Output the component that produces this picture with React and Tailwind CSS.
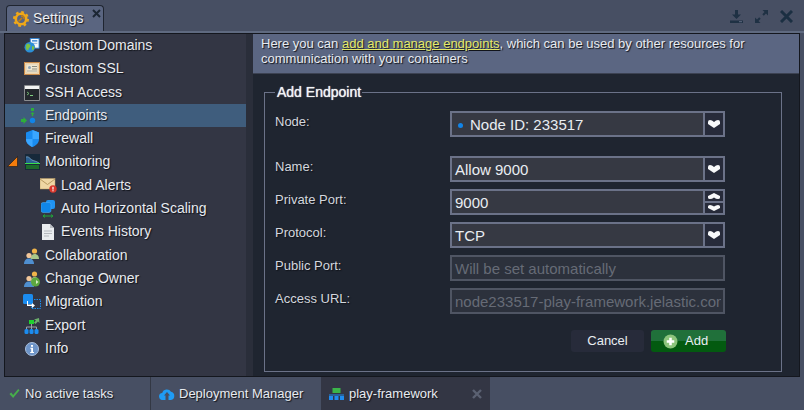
import React from "react";

const shadow = "[text-shadow:1px_1px_1px_#11141b]";

const DomainsIcon = () => (
  <svg width="16" height="15" viewBox="0 0 18 17">
    <rect x="7" y="0.5" width="10" height="11" fill="#f4f8fc" stroke="#2a7fd0" />
    <rect x="9" y="2.5" width="6" height="1.5" fill="#2a7fd0" />
    <rect x="9" y="5.5" width="6" height="1" fill="#7fa9d0" />
    <circle cx="6.5" cy="10.5" r="6" fill="#2b8fd8" />
    <path d="M3 7c2-1 3 0 4 1s0 2-1 3-1 3-2 3-2-2-2-3 0-3 1-4zM9 9l3 1-1 3-2 1z" fill="#7cc043" />
  </svg>
);
const SslIcon = () => (
  <svg width="16" height="13" viewBox="0 0 16 13">
    <rect x="0.5" y="0.5" width="15" height="12" fill="#f3dcb4" stroke="#c98a4a" />
    <rect x="2" y="2" width="12" height="9" fill="#efe6d0" stroke="#d9b98a" strokeWidth="0.5" />
    <circle cx="5.5" cy="5.5" r="1.5" fill="#8da4b8" />
    <rect x="8" y="4" width="5" height="1" fill="#8d8d80" />
    <rect x="8" y="6.5" width="5" height="1" fill="#8d8d80" />
    <rect x="3" y="8.5" width="10" height="1" fill="#a9a9a0" />
  </svg>
);
const SshIcon = () => (
  <svg width="16" height="16" viewBox="0 0 16 16">
    <rect x="0" y="0" width="16" height="16" rx="1" fill="#8b8d90" />
    <rect x="1" y="1" width="14" height="3" fill="#f2f2f2" />
    <rect x="1" y="4" width="14" height="11" fill="#23272c" />
    <path d="M3 7l2 1.5L3 10" stroke="#7fd07f" strokeWidth="0.8" fill="none" />
    <rect x="6" y="10" width="3" height="1" fill="#7fd07f" />
  </svg>
);
const EndpointsIcon = () => (
  <svg width="18" height="18" viewBox="0 0 18 18" className="-translate-x-[2px]">
    <rect x="10" y="1" width="3" height="3" fill="#2fae3a" />
    <path d="M11.500 5l2 2h-1.300v2h-1.400V7H9.500z" fill="#2fae3a" />
    <path d="M0 12h2.500V10L6 13.500 2.500 17v-2H0z" fill="#2fae3a" />
    <circle cx="11.500" cy="13.500" r="2.700" fill="#1184e8" />
  </svg>
);
const FirewallIcon = () => (
  <svg width="13" height="17" viewBox="0 0 13 17">
    <path d="M6.500 0L13 2.500V9c0 4-3 6.500-6.500 8C3 15.500 0 13 0 9V2.500z" fill="#1a8cf0" />
    <path d="M6.500 0L13 2.500V9H6.500z" fill="#3aa6ff" />
    <path d="M0 9h6.500v8C3 15.500 0 13 0 9z" fill="#3aa6ff" />
  </svg>
);
const MonitoringIcon = () => (
  <svg width="15" height="16" viewBox="0 0 15 16">
    <rect width="15" height="16" fill="#17293a" />
    <path d="M1 3c3-1 4 2 6 3s4 1 7 3v1H1z" fill="#2b5f8f" />
    <path d="M1 3c3-1 4 2 6 3s4 1 7 3" stroke="#9cc6e8" strokeWidth="0.6" fill="none" />
    <rect x="0" y="9" width="15" height="1" fill="#3adf4a" />
    <rect x="1" y="11" width="13" height="4" fill="#1c6a2c" />
  </svg>
);
const AlertsIcon = () => (
  <svg width="17" height="15" viewBox="0 0 17 15">
    <rect x="0" y="0.500" width="15" height="10.500" fill="#efd7a4" stroke="#b89a62" strokeWidth="0.5" />
    <path d="M0 1l7.500 5.500L15 1" stroke="#b89a62" fill="none" />
    <circle cx="13" cy="11" r="3.700" fill="#d8372c" />
    <rect x="12.400" y="8.800" width="1.200" height="2.800" fill="#fff" />
    <rect x="12.400" y="12.200" width="1.200" height="1.100" fill="#fff" />
  </svg>
);
const ScalingIcon = () => (
  <svg width="15" height="18" viewBox="0 0 15 18">
    <rect x="5" y="0" width="9" height="9" rx="2" fill="#1f93f2" />
    <rect x="0" y="2.500" width="10" height="10" rx="2" fill="#0f86ea" stroke="#56aef5" strokeWidth="0.5" />
    <path d="M2 16h10M2 16l2-1.500M2 16l2 1.500M12 16l-2-1.500M12 16l-2 1.500" stroke="#22a83a" fill="none" />
  </svg>
);
const HistoryIcon = () => (
  <svg width="12" height="16" viewBox="0 0 12 16">
    <path d="M0 0h8l4 4v12H0z" fill="#e9ecef" />
    <path d="M8 0l4 4H8z" fill="#b9bdc2" />
    <path d="M2 7h8M2 9.500h8M2 12h5" stroke="#b4b8bd" />
  </svg>
);
const PeopleIcon = ({ swap }) => (
  <svg width="16" height="16" viewBox="0 0 16 16">
    <circle cx="10.500" cy="3" r="2.600" fill="#f0b44a" />
    <path d="M6.500 11c0-3 2-5 4-5s4.500 1 4.500 5z" fill="#a9c68a" />
    <circle cx="5" cy="7.500" r="2.600" fill="#f3c79a" />
    <path d="M0 16c0-3.500 2-5.500 5-5.500s5 2 5 5.500z" fill="#4f8fd0" />
    {swap && <circle cx="11.500" cy="11" r="4.500" fill="#5da83f" />}
    {swap && <path d="M9 11h3V9l2.500 2-2.500 2v-2H9z" fill="#d9f0c8" />}
  </svg>
);
const MigrationIcon = () => (
  <svg width="18" height="15" viewBox="0 0 18 15">
    <rect x="0" y="0" width="10" height="10" rx="1.500" fill="#1b8cf0" />
    <rect x="8.500" y="5.500" width="9" height="9" fill="none" stroke="#1b8cf0" strokeDasharray="1.500 1" />
    <path d="M5 7v3.500h4V9l3 2.500L9 14v-2H4V7z" fill="#fff" />
  </svg>
);
const ExportIcon = () => (
  <svg width="16" height="16" viewBox="0 0 16 16">
    <rect x="5" y="2" width="5" height="4" fill="#1fd12f" />
    <path d="M10 1.500L15 0l.500 5-1.500-1.500L11.500 6 10 4.500l2-2z" fill="#6cae6c" />
    <path d="M7.500 6v3M2.500 11V9h10v2M7.500 9v2" stroke="#9aa0a8" fill="none" />
    <rect x="0.500" y="11" width="4" height="5" rx="1.500" fill="#1b8cf0" />
    <rect x="5.500" y="11" width="4" height="5" rx="1.500" fill="#1b8cf0" />
    <rect x="10.500" y="11" width="4" height="5" rx="1.500" fill="#1b8cf0" />
  </svg>
);
const InfoIcon = () => (
  <svg width="14" height="14" viewBox="0 0 14 14">
    <circle cx="7" cy="7" r="6.500" fill="#6d94c8" stroke="#a9bfdd" />
    <rect x="6" y="3" width="2" height="1.800" fill="#fff" />
    <path d="M5.300 5.800H8V10h1v1H5.200v-1h1V6.800h-.9z" fill="#fff" />
  </svg>
);
const GearIcon = () => (
  <svg width="16" height="16" viewBox="0 0 16 16">
    <circle cx="8" cy="8" r="5.200" fill="none" stroke="#f0a818" strokeWidth="2.600" />
    <circle cx="8" cy="8" r="6.900" fill="none" stroke="#f0a818" strokeWidth="2.200" strokeDasharray="2.700 2.720" />
    <path d="M5.500 10.500L9 7M8 5.200a2.200 2.200 0 0 1 2.800 2.800" stroke="#c47f10" strokeWidth="1.500" fill="none" />
  </svg>
);
const Chevron = ({ up, small }) => (
  <svg width="12" height={small ? 6 : 8} viewBox="0 0 12 8" preserveAspectRatio="none" className={up ? "rotate-180" : ""}>
    <path d="M0 2Q0 0 2 0Q4 0 6 2Q8 0 10 0Q12 0 12 2V4L6 8 0 4z" fill="#f8f9fa" />
  </svg>
);

const tree = [
  { label: "Custom Domains", icon: <DomainsIcon /> },
  { label: "Custom SSL", icon: <SslIcon />, tall: true },
  { label: "SSH Access", icon: <SshIcon /> },
  { label: "Endpoints", icon: <EndpointsIcon />, selected: true },
  { label: "Firewall", icon: <FirewallIcon /> },
  { label: "Monitoring", icon: <MonitoringIcon />, open: true, tall: true },
  { label: "Load Alerts", icon: <AlertsIcon />, child: true },
  { label: "Auto Horizontal Scaling", icon: <ScalingIcon />, child: true },
  { label: "Events History", icon: <HistoryIcon />, child: true, tall: true },
  { label: "Collaboration", icon: <PeopleIcon /> },
  { label: "Change Owner", icon: <PeopleIcon swap /> },
  { label: "Migration", icon: <MigrationIcon />, tall: true },
  { label: "Export", icon: <ExportIcon /> },
  { label: "Info", icon: <InfoIcon /> },
];

const TreeRow = ({ label, icon, selected, open, child, tall }) => (
  <div className={`flex items-center ${tall ? "h-[24px] pb-[1px]" : "h-[23px]"} ${selected ? "bg-[#3f5d7d]" : ""}`}>
    <div className="ml-[3px] flex w-[8px] justify-center">
      {open && (
        <svg width="11" height="11" viewBox="0 0 11 11" className="shrink-0">
          <path d="M0.500 10.500L10.500 0.500v10z" fill="#f47c0c" stroke="#11141b" strokeWidth="0.600" />
        </svg>
      )}
    </div>
    <div className={`flex w-[20px] justify-center ${child ? "ml-[22px]" : "ml-[6px]"}`}>{icon}</div>
    <span className={`ml-[3px] text-[14px] text-[#e8ebf0] ${shadow}`}>{label}</span>
  </div>
);

const Field = ({ label, value, disabled, dot, arrow, spin, last, first }) => (
  <div className={`flex ${first ? "mb-[19px]" : last ? "" : "mb-[7px]"}`}>
    <label className={`w-[175px] pt-[1px] text-[13px] text-[#d3d7de] ${shadow}`}>{label}</label>
    <div className={`flex h-[26px] w-[275px] border-2 ${disabled ? "border-[#4f5563] bg-[#2c313c]" : "border-[#6b7288] bg-[#363943]"}`}>
      <div className={`flex min-w-0 flex-1 items-center overflow-hidden pt-[2px] pl-[3px] text-[15px] whitespace-nowrap ${disabled ? "mr-[2px] text-[#666b76]" : "text-[#e9edf2]"}`}>
        {dot && <span className="mr-[7px] ml-[3px] h-[5px] w-[5px] shrink-0 rounded-full bg-[#1184e8]" />}
        {value}
      </div>
      {arrow && (
        <div className="flex w-[20px] items-center justify-center border-l-2 border-[#6b7288] bg-[#272b3a]">
          <Chevron />
        </div>
      )}
      {spin && (
        <div className="flex w-[20px] flex-col border-l-2 border-[#6b7288] bg-[#272b3a]">
          <div className="flex flex-1 items-center justify-center border-b-2 border-[#6b7288]">
            <Chevron up small />
          </div>
          <div className="flex flex-1 items-center justify-center">
            <Chevron small />
          </div>
        </div>
      )}
    </div>
  </div>
);

export default function App() {
  return (
    <div className="flex h-[410px] w-[804px] flex-col overflow-hidden bg-[#474f63] font-['Liberation_Sans',Arial,sans-serif]">
      {/* tabs */}
      <div className="flex h-[33px] shrink-0 items-end border-b-2 border-[#5f6a80] pl-[6px]">
        <div className="relative flex h-[26px] w-[98px] items-center rounded-t-[4px] border border-b-0 border-[#1f2530] bg-[#5a6580] pl-[6px]">
          <GearIcon />
          <span className={`ml-[4px] text-[14px] text-[#eef0f4] ${shadow}`}>Settings</span>
          <svg width="9" height="9" viewBox="0 0 9 9" className="absolute top-[3px] right-[2px]">
            <path d="M1 1l7 7M8 1L1 8" stroke="#1b2633" strokeWidth="2" />
          </svg>
        </div>
        <div className="mr-[11px] mb-[8px] ml-auto flex items-center gap-[12px]">
          <svg width="13" height="13" viewBox="0 0 13 13">
            <path d="M5 0h3v4.500h3L6.500 9 2 4.500h3zM0 10.500h13V13H0z" fill="#1f3144" />
            <rect x="9" y="11.200" width="3" height="1" fill="#5f6a80" />
          </svg>
          <svg width="13" height="13" viewBox="0 0 13 13">
            <path d="M7.500 0H13v5.500l-2-2L8.800 5.700 7.300 4.200 9.500 2zM5.500 13H0V7.500l2 2 2.200-2.200 1.500 1.500L3.500 11z" fill="#1f3144" />
          </svg>
          <svg width="13" height="13" viewBox="0 0 13 13">
            <path d="M1 1l11 11M12 1L1 12" stroke="#1b2f42" strokeWidth="3" />
          </svg>
        </div>
      </div>

      {/* window body */}
      <div className="mx-[4px] flex h-[344px] shrink-0 border border-[#14171e] bg-[#14171e]">
        <div className="w-[241px] shrink-0 bg-[#333644]">
          {tree.map((row) => (
            <TreeRow key={row.label} {...row} />
          ))}
        </div>
        <div className="w-[7px] shrink-0 bg-[#2a2e3a]" />
        <div className="flex min-w-0 flex-1 flex-col bg-[#1f2530]">
          <div className={`h-[40px] shrink-0 border-b border-[#3c4252] bg-[#5b6682] px-[8px] pt-[2px] text-[13px] leading-[15px] text-[#e8ebf0] ${shadow}`}>
            Here you can{" "}
            <span className="text-[#e4e96a] underline">add and manage endpoints</span>, which can be used by other resources for communication with your containers
          </div>
          <div className="relative mx-[11px] mt-[18px] h-[280px] w-[518px] border border-[#6b7288] px-[10px] pt-[18px]">
            <span className="absolute top-[-9px] left-[10px] bg-[#1f2530] pr-[1px] pl-[2px] text-[14px] leading-[16px] text-[#f2f4f7] [text-shadow:0_0_1px_#ffffff]">
              Add Endpoint
            </span>
            <Field label="Node:" value="Node ID: 233517" dot arrow first />
            <Field label="Name:" value="Allow 9000" arrow />
            <Field label="Private Port:" value="9000" spin />
            <Field label="Protocol:" value="TCP" arrow />
            <Field label="Public Port:" value="Will be set automatically" disabled />
            <Field label="Access URL:" value="node233517-play-framework.jelastic.com" disabled last />
            <div className="mt-[16px] flex justify-end gap-[7px] pr-[45px]">
              <button className="h-[22px] w-[73px] rounded-[3px] bg-[#272b3a] text-[13px] text-[#e9edf2]">Cancel</button>
              <button className="flex h-[22px] w-[75px] items-center gap-[7px] rounded-[3px] bg-[linear-gradient(#20703a_50%,#035a10_50%)] pl-[12px] text-[13px] text-[#e9edf2]">
                <svg width="15" height="15" viewBox="0 0 14 14">
                  <circle cx="7" cy="7" r="6.500" fill="#8cc47c" />
                  <path d="M5.800 3.500h2.400v2.300h2.300v2.400H8.200v2.300H5.800V8.200H3.500V5.800h2.300z" fill="#fff" />
                </svg>
                Add
              </button>
            </div>
          </div>
        </div>
      </div>

      {/* status bar */}
      <div className="flex flex-1 items-stretch text-[13px] text-[#e8ebf0]">
        <div className={`flex w-[151px] items-center border-r border-[#333844] pl-[9px] ${shadow}`}>
          <svg width="11" height="11" viewBox="0 0 12 11">
            <path d="M0.500 6l2-1.500L4.500 7 10 0.500l1.500 1.500L4.500 10.500z" fill="#47ae4b" />
          </svg>
          <span className="ml-[5px]">No active tasks</span>
        </div>
        <div className={`flex w-[170px] items-center pl-[8px] ${shadow}`}>
          <svg width="16" height="13" viewBox="0 0 16 13">
            <path d="M4 13a3.500 3.500 0 0 1-.800-7A4.800 4.800 0 0 1 12 4.800 4.200 4.200 0 0 1 12 13H9.500V8.500H11L8 5 5 8.500h1.500V13z" fill="#1f9cf5" />
          </svg>
          <span className="ml-[4px]">Deployment Manager</span>
        </div>
        <div className={`relative flex w-[169px] items-center bg-[#333644] pl-[8px] ${shadow}`}>
          <svg width="15" height="12" viewBox="0 0 15 12">
            <rect x="3.500" y="0" width="8" height="5" fill="#3bb54a" />
            <rect x="0" y="8" width="4" height="4" fill="#1f8cf0" />
            <rect x="5.500" y="8" width="4" height="4" fill="#1f8cf0" />
            <rect x="11" y="8" width="4" height="4" fill="#1f8cf0" />
            <rect x="0" y="6.500" width="15" height="1" fill="#1f8cf0" />
          </svg>
          <span className="ml-[5px]">play-framework</span>
          <svg width="10" height="10" viewBox="0 0 10 10" className="absolute top-[12px] right-[8px]">
            <path d="M1 1l8 8M9 1L1 9" stroke="#5b6172" strokeWidth="2.400" />
          </svg>
        </div>
      </div>
    </div>
  );
}
